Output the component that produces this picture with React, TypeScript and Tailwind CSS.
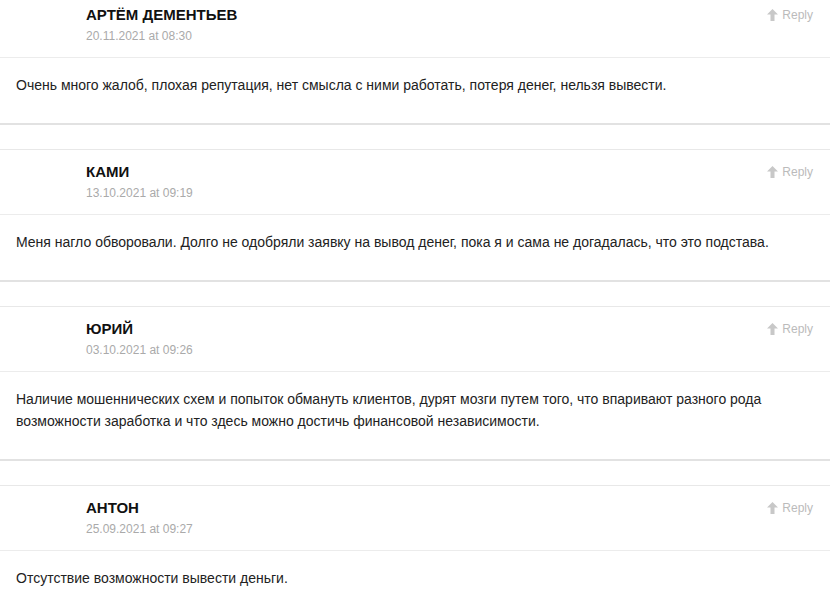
export default function App() {
  const comments = [
    {
      name: 'АРТЁМ ДЕМЕНТЬЕВ',
      date: '20.11.2021 at 08:30',
      text: 'Очень много жалоб, плохая репутация, нет смысла с ними работать, потеря денег, нельзя вывести.',
    },
    {
      name: 'КАМИ',
      date: '13.10.2021 at 09:19',
      text: 'Меня нагло обворовали. Долго не одобряли заявку на вывод денег, пока я и сама не догадалась, что это подстава.',
    },
    {
      name: 'ЮРИЙ',
      date: '03.10.2021 at 09:26',
      text: 'Наличие мошеннических схем и попыток обмануть клиентов, дурят мозги путем того, что впаривают разного рода возможности заработка и что здесь можно достичь финансовой независимости.',
    },
    {
      name: 'АНТОН',
      date: '25.09.2021 at 09:27',
      text: 'Отсутствие возможности вывести деньги.',
    },
  ];

  return (
    <div
      className="w-[830px] h-[610px] overflow-hidden bg-white"
      style={{ fontFamily: '"Liberation Sans", Arial, sans-serif' }}
    >
      <div className="-mt-[8px] flex flex-col gap-[24px]">
        {comments.map((c, i) => (
          <div key={i} className="border-t border-[#e8e8e8] border-b-2 border-b-[#e2e2e2]">
            {/* шапка */}
            <div className="h-[65px] border-b border-[#ececec] pl-[86px] pr-[17px] pt-[12px] flex justify-between">
              <div className="flex flex-col">
                <p className="text-[15px] leading-[20px] font-bold text-[#111]">{c.name}</p>
                <p className="text-[12px] leading-[20px] text-[#aaa] mt-[1px]">{c.date}</p>
              </div>
              <div className="flex items-start gap-[4px] text-[12px] leading-[20px] text-[#bbb]">
                <svg width="11" height="12" viewBox="0 0 11 12" className="mt-[4px]">
                  <path d="M5.5 0 L11 5.5 H7.5 V12 H3.5 V5.5 H0 Z" fill="#c8c8c8" />
                </svg>
                <span>Reply</span>
              </div>
            </div>
            {/* текст */}
            <div className="px-[16px] pt-[16px] pb-[27px]">
              <p className="text-[14px] leading-[22px] text-[#222]">{c.text}</p>
            </div>
          </div>
        ))}
      </div>
    </div>
  );
}
